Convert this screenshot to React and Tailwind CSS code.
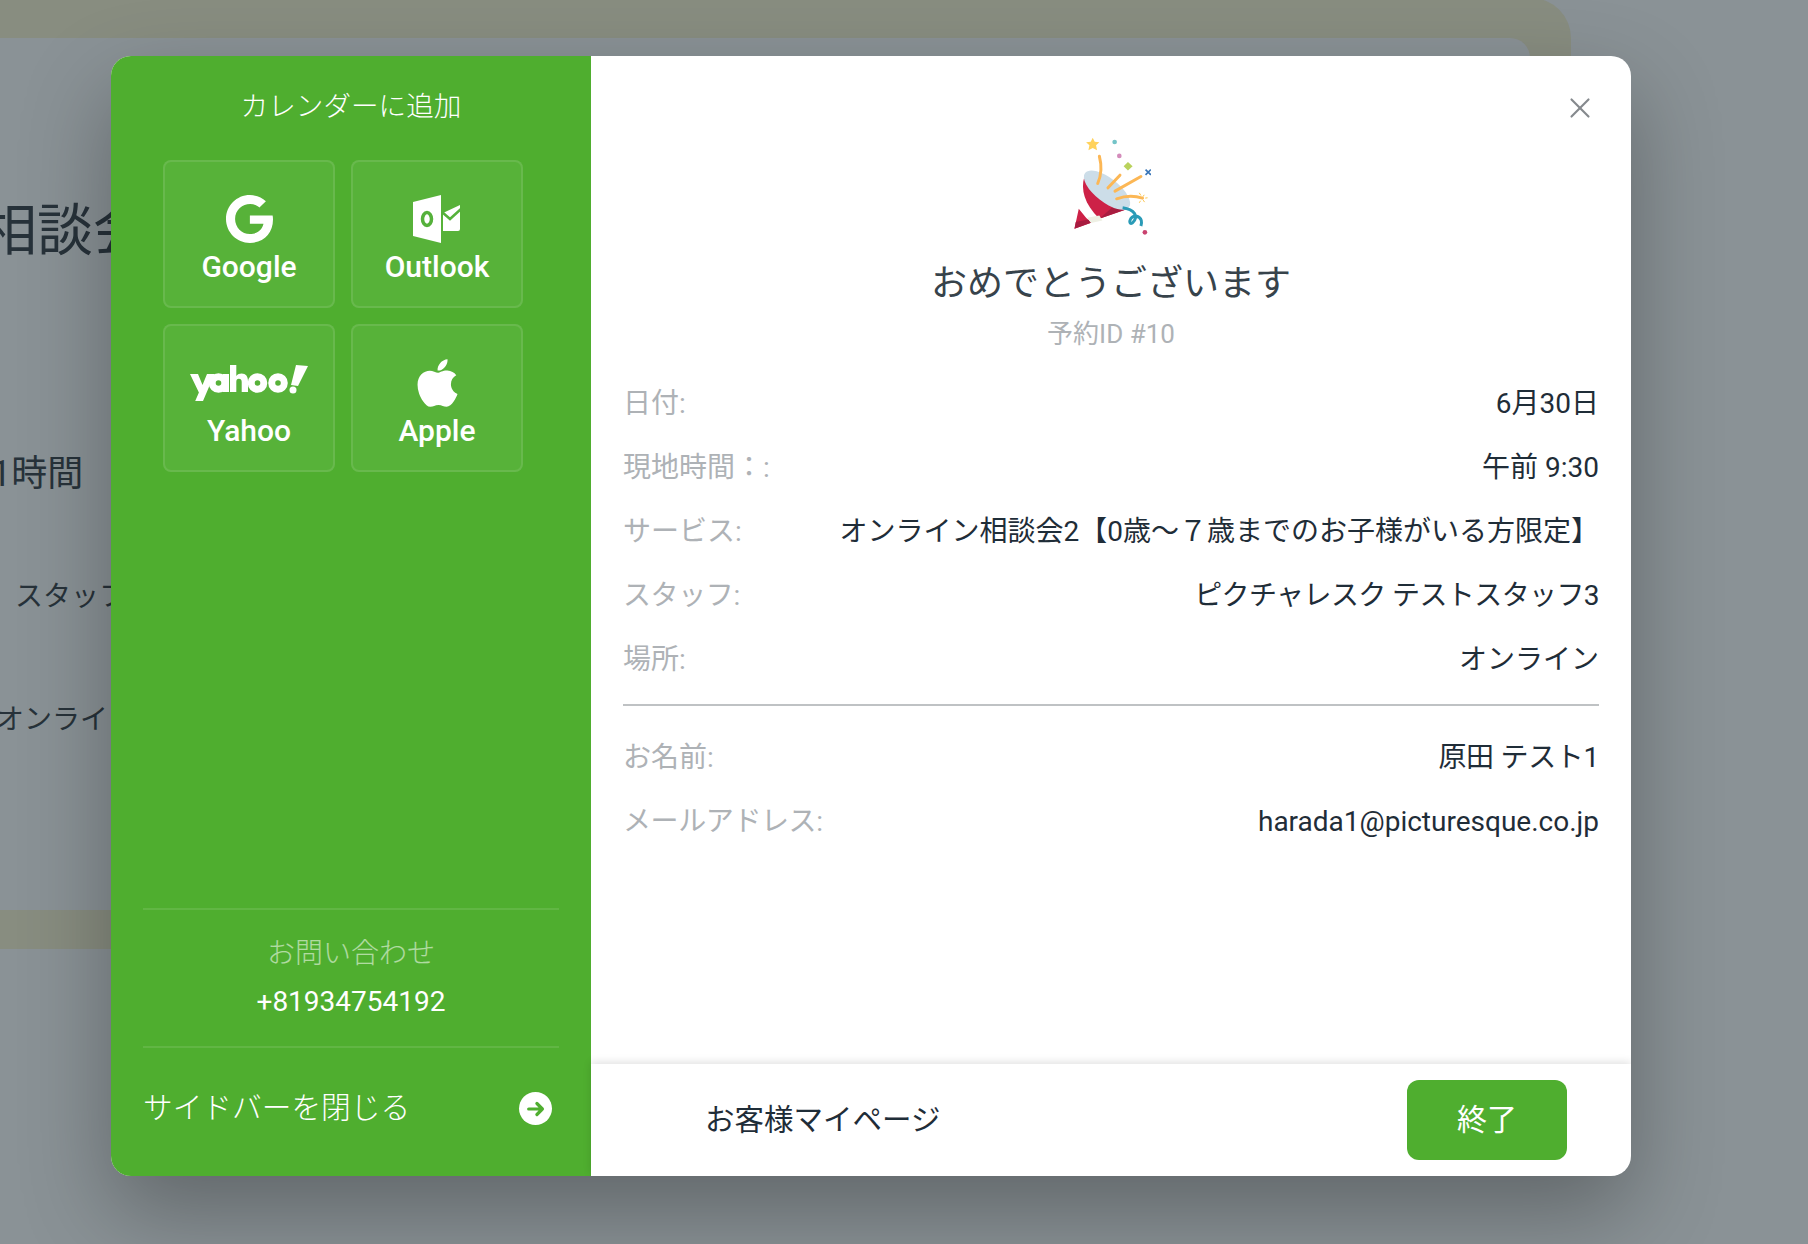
import React from "react";
import { X } from "lucide-react";

const font = { fontFamily: 'Roboto, "Noto Sans CJK JP", sans-serif' };

const rows = [
  { label: "日付:", value: "6月30日" },
  { label: "現地時間：:", value: "午前 9:30" },
  { label: "サービス:", value: "オンライン相談会2【0歳～７歳までのお子様がいる方限定】" },
  { label: "スタッフ:", value: "ピクチャレスク テストスタッフ3", labelClass: "tracking-[-0.4px]", valueClass: "tracking-[-0.6px]" },
  { label: "場所:", value: "オンライン" },
];

const customerRows = [
  { label: "お名前:", value: "原田 テスト1", valueClass: "tracking-[-0.3px]" },
  { label: "メールアドレス:", value: "harada1@picturesque.co.jp", labelClass: "tracking-[-0.4px]" },
];

const GoogleIcon = () => (
  <svg viewBox="0 8 488 496" className="h-[48px] w-[47px]" fill="#fff">
    <path d="M488 261.8C488 403.3 391.1 504 248 504 110.8 504 0 393.2 0 256S110.8 8 248 8c66.8 0 123 24.5 166.3 64.9l-67.5 64.9C258.5 52.6 94.3 116.6 94.3 256c0 86.5 69.1 156.6 153.7 156.6 98.2 0 135-70.4 140.8-106.9H248v-85.3h236.1c2.3 12.7 3.9 24.9 3.9 41.4z" />
  </svg>
);

const OutlookIcon = () => (
  <svg viewBox="0 0 48 48" className="h-[48px] w-[48px]">
    <path fill="#fff" d="M0 7 L28 0 V48 L0 41 Z" />
    <ellipse cx="14" cy="24" rx="4.5" ry="6.500" fill="none" stroke="#55b13b" strokeWidth="3.500" />
    <path fill="#fff" d="M30 18 L47 10 V34 Q47 36 45 36 H30 Z" />
    <path d="M29 17 L37 24 L48 14" fill="none" stroke="#55b13b" strokeWidth="2.500" />
  </svg>
);

const YahooIcon = () => (
  <svg viewBox="0 0 118 36" className="h-[36px] w-[118px]" fill="#fff">
    <path d="M0 9h8l4.500 11L17 9h7.500L13 36H5.200l3.700-8.500z" />
    <circle cx="28.500" cy="18" r="6.300" fill="none" stroke="#fff" strokeWidth="7" />
    <rect x="33" y="9" width="6" height="18" />
    <path d="M40 0h6.300v11c1.400-1.600 3.300-2.400 5.200-2.400 4.500 0 6.500 3 6.500 7.500V27h-6.300V17c0-2.200-1-3.200-2.800-3.200-1.800 0-2.600 1.200-2.600 3.200v10H40z" />
    <circle cx="67.500" cy="18" r="6.300" fill="none" stroke="#fff" strokeWidth="7" />
    <circle cx="88" cy="18" r="6.300" fill="none" stroke="#fff" strokeWidth="7" />
    <path d="M106 0l12 1-10 20-7-1z" />
    <circle cx="103" cy="25" r="3.500" />
  </svg>
);

const AppleIcon = () => (
  <svg viewBox="0 30 384 452" className="h-[48px] w-[41px]" fill="#fff">
    <path d="M318.700 268.700c-.2-36.700 16.400-64.400 50-84.800-18.800-26.900-47.200-41.700-84.700-44.600-35.500-2.800-74.300 20.700-88.500 20.700-15 0-49.400-19.700-76.400-19.700C63.300 141.200 4 184.800 4 273.500q0 39.300 14.400 81.200c12.800 36.700 59 126.700 107.200 125.200 25.200-.6 43-17.900 75.800-17.900 31.800 0 48.300 17.900 76.400 17.900 48.600-.7 90.400-82.500 102.600-119.300-65.200-30.700-61.700-90-61.700-91.900zm-56.600-164.200c27.300-32.400 24.800-61.900 24-72.500-24.100 1.400-52 16.400-67.900 34.900-17.500 19.800-27.800 44.300-25.600 71.900 26.100 2 49.900-11.400 69.500-34.300z" />
  </svg>
);

const Confetti = () => (
  <svg viewBox="120 190 240 310" className="h-[103px] w-[80px]">
    <path fill="#cd2147" d="M160 322 C148 360 160 405 205 448 L285 420 Z" />
    <path fill="#a81c40" d="M205 448 L285 420 L250 408 Z" />
    <ellipse cx="228" cy="362" rx="84" ry="36" transform="rotate(38 228 362)" fill="#ccdde8" />
    <path fill="#cd2147" d="M143 418 L130 478 L180 460 L165 445 Z" />
    <path fill="#a81c40" d="M134 458 L130 478 L180 460 L172 450 Z" />
    <path fill="#eef0e4" d="M168 445 L205 438 L214 453 L180 461 Z" />
    <g fill="none" stroke="#fcb755" strokeWidth="9" strokeLinecap="round">
      <path d="M205 260 C213 290 212 315 200 342" />
      <path d="M267 317 L231 355" />
      <path d="M330 321 L252 365" />
      <path d="M257 388 C285 378 310 378 335 386" />
    </g>
    <path d="M275 415 C310 420 325 440 305 460 C290 470 295 440 315 440 C335 445 333 460 330 470" stroke="#2a9bb7" strokeWidth="9" fill="none" />
    <path fill="#ffd25c" d="M185 204 L191 216 L205 218 L195 227 L198 242 L185 235 L172 242 L175 227 L165 218 L179 216 Z" />
    <circle cx="251" cy="217" r="7" fill="#74c4c8" />
    <circle cx="265" cy="259" r="7" fill="#d48cbb" />
    <path fill="#b9d25c" d="M291 277 L305 290 L291 303 L278 290 Z" />
    <path d="M344 300 L360 316 M360 300 L344 316" stroke="#3a76b8" strokeWidth="5" />
    <path d="M340 376 L336 382 M350 385 L343 386 M341 398 L337 392 M325 400 L329 394 M325 370 L330 378" stroke="#fcc64f" strokeWidth="3" />
    <circle cx="342" cy="489" r="7" fill="#c9426f" />
  </svg>
);

const CalendarButton = ({ icon, label }) => (
  <div className="flex h-[148px] w-[172px] flex-col items-center justify-center rounded-[8px] border-2 border-white/10 bg-white/5 pt-[13px] text-white">
    <div className="flex h-[48px] items-center justify-center">{icon}</div>
    <div className="mt-[4px] text-[30px] leading-[40px] font-medium">{label}</div>
  </div>
);

const InfoRow = ({ label, value, labelClass = "", valueClass = "" }) => (
  <div className="flex h-[64px] items-center justify-between text-[28px] leading-[40px]">
    <span className={`text-[#aeb2b6] ${labelClass}`}>{label}</span>
    <span className={`text-[#1f2d38] ${valueClass}`}>{value}</span>
  </div>
);

const App = () => {
  return (
    <div className="relative h-[1244px] w-full overflow-hidden bg-[#8a9296]" style={font}>
      {/* Page behind the overlay */}
      <div className="-mt-[2px] h-[951px] w-[1571px] rounded-tr-[40px] rounded-br-[40px] bg-[#888d80] pt-[40px] pr-[41px]">
        <div className="h-[872px] w-full overflow-hidden rounded-tr-[20px] rounded-br-[20px] bg-[#8a9296] text-[#27323a]">
          <div className="-ml-[19px] pt-[157px] text-[56px] leading-[72px] whitespace-nowrap">相談会2</div>
          <div className="-ml-[9px] mt-[183px] text-[36px] leading-[48px]">1時間</div>
          <div className="mt-[79px] ml-[15px] text-[28px] leading-[40px]">スタッフ</div>
          <div className="mt-[83px] -ml-[4px] text-[28px] leading-[40px]">オンライン</div>
        </div>
      </div>

      {/* Booking confirmation dialog */}
      <div className="absolute top-[56px] left-[111px] flex h-[1120px] w-[1520px] overflow-hidden rounded-[20px] bg-white shadow-[0_36px_90px_rgba(0,0,0,0.3)]">
        <aside className="flex w-[480px] flex-col bg-[#4fae2f] text-white">
          <h3 className="pt-[30px] text-center text-[27.600px] leading-[42px] font-light">カレンダーに追加</h3>
          <div className="mt-[32px] ml-[52px] grid w-[360px] grid-cols-2 gap-[16px]">
            <CalendarButton icon={<GoogleIcon />} label="Google" />
            <CalendarButton icon={<OutlookIcon />} label="Outlook" />
            <CalendarButton icon={<YahooIcon />} label="Yahoo" />
            <CalendarButton icon={<AppleIcon />} label="Apple" />
          </div>
          <div className="mx-[32px] mt-auto border-t-2 border-white/10 pt-[22px] pb-[22px] text-center">
            <div className="text-[28px] leading-[44px] font-light text-white/55">お問い合わせ</div>
            <div className="mt-[4px] text-[28px] leading-[44px]">+81934754192</div>
          </div>
          <div className="mx-[32px] flex h-[130px] items-center justify-between border-t-2 border-white/10 pr-[7px] pb-[7px]">
            <span className="text-[29.700px] font-light">サイドバーを閉じる</span>
            <span className="flex h-[33px] w-[33px] items-center justify-center rounded-full bg-white text-[#4fae2f]">
              <svg viewBox="0 0 24 24" className="h-[22px] w-[22px]" fill="none" stroke="currentColor" strokeWidth="3.500" strokeLinecap="round" strokeLinejoin="round">
                <path d="M4 12h15M13 6l6 6-6 6" />
              </svg>
            </span>
          </div>
        </aside>

        <main className="relative flex flex-1 flex-col">
          <button className="absolute top-[35px] right-[34px] text-[#85898d]">
            <X className="h-[34px] w-[34px]" strokeWidth={1.500} />
          </button>
          <div className="flex flex-1 flex-col px-[32px]">
            <div className="mt-[77px] flex justify-center">
              <Confetti />
            </div>
            <div className="mt-[24px] text-center text-[36px] leading-[48px] text-[#37434b]">おめでとうございます</div>
            <div className="mt-[6px] text-center text-[26px] leading-[40px] text-[#aeb2b6]">予約ID #10</div>
            <div className="mt-[18px]">
              {rows.map((row) => (
                <InfoRow key={row.label} {...row} />
              ))}
            </div>
            <div className="mt-[12px] mb-[20px] border-t-2 border-[#bfc2c4]" />
            <div>
              {customerRows.map((row) => (
                <InfoRow key={row.label} {...row} />
              ))}
            </div>
          </div>
          <div className="flex h-[112px] items-center justify-between pr-[64px] pl-[114px] shadow-[0_-2px_8px_rgba(0,0,0,0.12)]">
            <span className="text-[29.500px] text-[#1f2d38]">お客様マイページ</span>
            <button className="h-[80px] w-[160px] rounded-[12px] bg-[#4fae2f] pb-[2px] text-[30px] text-white">終了</button>
          </div>
        </main>
      </div>
    </div>
  );
};

export default App;
